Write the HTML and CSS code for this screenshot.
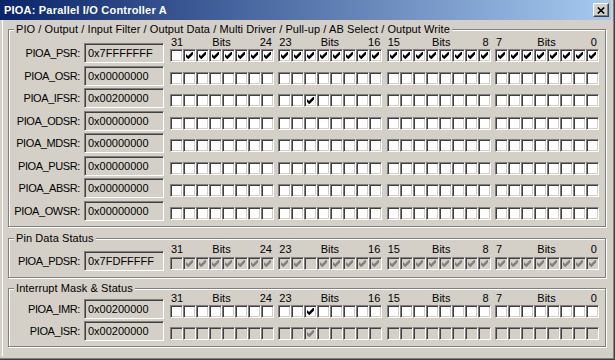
FILE: index.html
```html
<!DOCTYPE html>
<html lang="en">
<head>
    <meta charset="UTF-8">
    <meta name="viewport" content="width=device-width, initial-scale=1.0">
    <title>PIOA: Parallel I/O Controller A</title>
    <link rel="stylesheet" href="styles.css">
</head>
<body>
    <div class="window">
        <div class="titlebar">
            <span class="caption">PIOA: Parallel I/O Controller A</span>
            <button class="close-btn" aria-label="Close">
                <svg width="8" height="7" viewBox="0 0 8 7"><path d="M0.8 0.5L7.2 6.5M7.2 0.5L0.8 6.5" stroke="#000" stroke-width="1.6"/></svg>
            </button>
        </div>
        <div class="window-body">
            <div class="group group-pio">
                <div class="group-title">PIO / Output / Input Filter / Output Data / Multi Driver / Pull-up / AB Select / Output Write</div>
                <div class="bit-head">
                    <span class="head-byte"><span>31</span><span>Bits</span><span>24</span></span>
                    <span class="head-byte"><span>23</span><span>Bits</span><span>16</span></span>
                    <span class="head-byte"><span>15</span><span>Bits</span><span>8</span></span>
                    <span class="head-byte"><span>7</span><span>Bits</span><span>0</span></span>
                </div>
                <div class="reg-row">
                    <label class="reg-name">PIOA_PSR:</label>
                    <div class="reg-value">0x7FFFFFFF</div>
                    <div class="bits" data-value="7FFFFFFF"></div>
                </div>
                <div class="reg-row">
                    <label class="reg-name">PIOA_OSR:</label>
                    <div class="reg-value">0x00000000</div>
                    <div class="bits" data-value="00000000"></div>
                </div>
                <div class="reg-row">
                    <label class="reg-name">PIOA_IFSR:</label>
                    <div class="reg-value">0x00200000</div>
                    <div class="bits" data-value="00200000"></div>
                </div>
                <div class="reg-row">
                    <label class="reg-name">PIOA_ODSR:</label>
                    <div class="reg-value">0x00000000</div>
                    <div class="bits" data-value="00000000"></div>
                </div>
                <div class="reg-row">
                    <label class="reg-name">PIOA_MDSR:</label>
                    <div class="reg-value">0x00000000</div>
                    <div class="bits" data-value="00000000"></div>
                </div>
                <div class="reg-row">
                    <label class="reg-name">PIOA_PUSR:</label>
                    <div class="reg-value">0x00000000</div>
                    <div class="bits" data-value="00000000"></div>
                </div>
                <div class="reg-row">
                    <label class="reg-name">PIOA_ABSR:</label>
                    <div class="reg-value">0x00000000</div>
                    <div class="bits" data-value="00000000"></div>
                </div>
                <div class="reg-row">
                    <label class="reg-name">PIOA_OWSR:</label>
                    <div class="reg-value">0x00000000</div>
                    <div class="bits" data-value="00000000"></div>
                </div>
            </div>

            <div class="group group-pin">
                <div class="group-title">Pin Data Status</div>
                <div class="bit-head">
                    <span class="head-byte"><span>31</span><span>Bits</span><span>24</span></span>
                    <span class="head-byte"><span>23</span><span>Bits</span><span>16</span></span>
                    <span class="head-byte"><span>15</span><span>Bits</span><span>8</span></span>
                    <span class="head-byte"><span>7</span><span>Bits</span><span>0</span></span>
                </div>
                <div class="reg-row">
                    <label class="reg-name">PIOA_PDSR:</label>
                    <div class="reg-value">0x7FDFFFFF</div>
                    <div class="bits disabled" data-value="7FDFFFFF"></div>
                </div>
            </div>

            <div class="group group-irq">
                <div class="group-title">Interrupt Mask &amp; Status</div>
                <div class="bit-head">
                    <span class="head-byte"><span>31</span><span>Bits</span><span>24</span></span>
                    <span class="head-byte"><span>23</span><span>Bits</span><span>16</span></span>
                    <span class="head-byte"><span>15</span><span>Bits</span><span>8</span></span>
                    <span class="head-byte"><span>7</span><span>Bits</span><span>0</span></span>
                </div>
                <div class="reg-row">
                    <label class="reg-name">PIOA_IMR:</label>
                    <div class="reg-value">0x00200000</div>
                    <div class="bits" data-value="00200000"></div>
                </div>
                <div class="reg-row">
                    <label class="reg-name">PIOA_ISR:</label>
                    <div class="reg-value">0x00200000</div>
                    <div class="bits disabled" data-value="00200000"></div>
                </div>
            </div>
        </div>
    </div>

    <script>
        // Build the 32 bit checkboxes of every register row from its value
        var CHECK = '<svg class="check" width="7" height="7" viewBox="0 0 7 7"><path d="M0 2L2 4L6 0H7V2.6L2.6 7H2L0 5Z"/></svg>';

        document.querySelectorAll('.bits').forEach(function(bits) {
            var value = parseInt(bits.dataset.value, 16);
            var html = '';
            for (var b = 0; b < 4; b++) {
                html += '<span class="byte">';
                for (var i = 0; i < 8; i++) {
                    var bit = 31 - (b * 8 + i);
                    var on = (value >>> bit) & 1;
                    html += '<span class="cb' + (on ? ' checked' : '') + '">' + (on ? CHECK : '') + '</span>';
                }
                html += '</span>';
            }
            bits.innerHTML = html;
        });
    </script>
</body>
</html>
```

FILE: styles.css
```css
body {
    margin: 0;
    font-family: 'Liberation Sans', Arial, sans-serif;
    font-size: 11px;
    color: #000;
    background: #404040;
}
.window {
    width: 615px;
    height: 360px;
    box-sizing: border-box;
    background: #d4d0c8;
    border-right: 1px solid #404040;
    border-bottom: 1px solid #404040;
    box-shadow: inset -1px -1px 0 #808080;
    padding: 0 3px 3px 0;
    display: flex;
    flex-direction: column;
}
.titlebar {
    height: 20px;
    flex: none;
    display: flex;
    align-items: center;
    justify-content: space-between;
    background: linear-gradient(to right, #0a246a, #a6caf0);
    padding: 0 2px 0 4px;
}
.caption {
    color: #fff;
    font-weight: bold;
    font-size: 11px;
    letter-spacing: 0.2px;
}
.close-btn {
    width: 16px;
    height: 14px;
    padding: 0;
    background: #d4d0c8;
    border: 1px solid;
    border-color: #fff #404040 #404040 #fff;
    box-shadow: inset -1px -1px 0 #808080;
    display: flex;
    align-items: center;
    justify-content: center;
}
.window-body {
    flex: 1;
    margin-left: 2px;
    border-left: 1px solid #fff;
    padding: 0 5px 0 5px;
    display: flex;
    flex-direction: column;
}
.group {
    border: 1px solid #808080;
    box-shadow: inset 1px 1px 0 #fff, 1px 1px 0 #fff;
    padding: 0 0 5px 0;
}
.group-title {
    display: table;
    line-height: 13px;
    margin: -7px 0 0 5px;
    padding: 0 2px;
    background: #d4d0c8;
    letter-spacing: 0.08px;
}
.bit-head {
    display: flex;
    gap: 4.33px;
    margin-left: 161px;
    height: 13px;
    line-height: 13px;
    margin-bottom: -6px;
}
.group-pio {
    margin-top: 9px;
}
.group-pin {
    margin-top: 11px;
    padding-bottom: 6px;
}
.group-pin .group-title {
    margin-bottom: -2px;
}
.group-pin .bit-head {
    margin-bottom: -5px;
}
.group-irq {
    margin-top: 10px;
}
.group-irq .group-title {
    margin-bottom: -3px;
}
.head-byte {
    width: 104px;
    box-sizing: border-box;
    padding: 0 2px 0 1px;
    display: flex;
    justify-content: space-between;
}
.reg-row {
    display: flex;
    align-items: flex-end;
    height: 20px;
}
.reg-row + .reg-row {
    margin-top: 2.5px;
}
.reg-name {
    width: 75px;
    box-sizing: border-box;
    padding-right: 4px;
    text-align: right;
    letter-spacing: -0.4px;
    align-self: center;
}
.reg-value {
    width: 80px;
    height: 20px;
    box-sizing: border-box;
    border: 1px solid;
    border-color: #808080 #fff #fff #808080;
    box-shadow: inset 1px 1px 0 #404040, inset -1px -1px 0 #d4d0c8;
    background: #d4d0c8;
    padding-left: 3px;
    line-height: 18px;
}
.bits {
    display: flex;
    gap: 4.33px;
    margin-left: 6px;
    margin-bottom: 1px;
}
.byte {
    display: flex;
}
.cb {
    width: 13px;
    height: 13px;
    box-sizing: border-box;
    border: 1px solid;
    border-color: #808080 #fff #fff #808080;
    box-shadow: inset 1px 1px 0 #404040, inset -1px -1px 0 #d4d0c8;
    background: #fff;
    display: flex;
    align-items: center;
    justify-content: center;
}
.check {
    fill: #000;
}
.bits.disabled .cb {
    background: #d4d0c8;
}
.bits.disabled .check {
    fill: #808080;
}
```
